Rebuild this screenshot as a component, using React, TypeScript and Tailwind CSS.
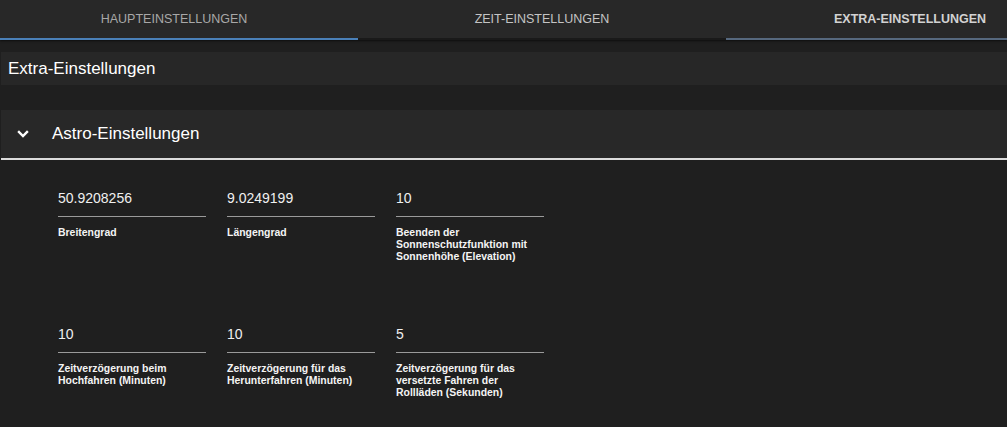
const fields = [
  { value: '50.9208256', label: 'Breitengrad' },
  { value: '9.0249199', label: 'Längengrad' },
  { value: '10', label: 'Beenden der Sonnenschutzfunktion mit Sonnenhöhe (Elevation)' },
  { value: '10', label: 'Zeitverzögerung beim Hochfahren (Minuten)' },
  { value: '10', label: 'Zeitverzögerung für das Herunterfahren (Minuten)' },
  { value: '5', label: 'Zeitverzögerung für das versetzte Fahren der Rollläden (Sekunden)' },
]

export default function App() {
  return (
    <div className="h-[427px] w-[1007px] overflow-hidden bg-[#1f1f1f] font-['Liberation_Sans',Arial,sans-serif]">
      {/* tabs */}
      <div className="h-[40px] overflow-hidden bg-[#282828] shadow-[0_1px_2px_rgba(0,0,0,0.6)] relative">
        <div className="flex -ml-[10px] w-[1104px]">
          <div className="w-[368px] h-[40px] flex items-center justify-center border-b-2 border-[#4a80b8]">
            <span className="text-[12.5px] text-[#a8a8a8] uppercase">Haupteinstellungen</span>
          </div>
          <div className="w-[368px] h-[40px] flex items-center justify-center border-b-2 border-[#1a1a1a]">
            <span className="text-[12.5px] text-[#c4c4c4] uppercase">Zeit-Einstellungen</span>
          </div>
          <div className="w-[368px] h-[40px] flex items-center justify-center border-b-2 border-[#56687e]">
            <span className="text-[12.5px] text-[#d2d2d2] font-bold uppercase">Extra-Einstellungen</span>
          </div>
        </div>
      </div>

      <div className="pt-[12px] pl-px">
        <div className="h-[33px] bg-[#272727] flex items-center pl-[7px]">
          <span className="text-[17px] text-white">Extra-Einstellungen</span>
        </div>

        <div className="mt-[25px]">
          <div className="h-[50px] bg-[#282828] flex items-center border-b-2 border-[#dcdcdc]">
            <svg className="ml-[15px] w-[14px] h-[14px]" viewBox="0 0 14 14" fill="none" stroke="white" strokeWidth={2.4} strokeLinecap="square">
              <path d="M3 5l4 4 4-4" />
            </svg>
            <span className="ml-[22px] text-[17px] text-white">Astro-Einstellungen</span>
          </div>

          <div className="pl-[57px] pt-[28px] grid grid-cols-[148px_148px_148px] gap-x-[21px] auto-rows-[136px]">
            {fields.map((f, i) => (
              <div key={i} className="flex flex-col">
                <div className="h-[29px] border-b border-[#9a9a9a] flex items-start">
                  <span className="text-[14px] text-[#f0f0f0]">{f.value}</span>
                </div>
                <div className="mt-[10px] w-[133px] text-[10.45px] leading-[12px] font-bold text-[#f4f4f4]">{f.label}</div>
              </div>
            ))}
          </div>
        </div>
      </div>
    </div>
  )
}
